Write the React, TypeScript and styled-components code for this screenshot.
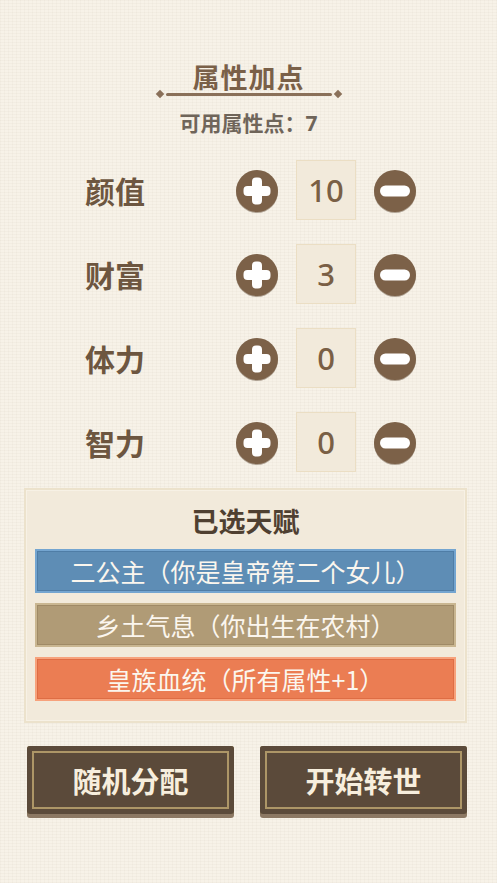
import styled, { createGlobalStyle } from 'styled-components'
import { useState } from 'react'

const GlobalStyle = createGlobalStyle`
  html, body {
    margin: 0;
    padding: 0;
  }
  body {
    background-color: #f7f2e8;
    background-image:
      repeating-linear-gradient(0deg, rgba(120, 100, 70, 0.035) 0 1px, transparent 1px 3px),
      repeating-linear-gradient(90deg, rgba(120, 100, 70, 0.03) 0 1px, transparent 1px 4px);
    font-family: "Noto Sans", "Noto Sans CJK SC", sans-serif;
  }
`

const attrs = [
  { name: '颜值', value: 10 },
  { name: '财富', value: 3 },
  { name: '体力', value: 0 },
  { name: '智力', value: 0 },
]

const talents = [
  { text: '二公主（你是皇帝第二个女儿）', kind: 'blue' },
  { text: '乡土气息（你出生在农村）', kind: 'tan' },
  { text: '皇族血统（所有属性+1）', kind: 'orange' },
]

const talentColors = {
  blue: { bg: '#5e8db5', edge: '#74a5d0', line: '#4f7da6' },
  tan: { bg: '#b09b76', edge: '#c9b691', line: '#9f8a66' },
  orange: { bg: '#eb7d53', edge: '#f7a27c', line: '#de6d44' },
}

const RoundIcon = ({ minus }: { minus?: boolean }) => (
  <svg width="44" height="45" viewBox="0 0 44 45">
    <circle cx="22" cy="23" r="21" fill="#5e4732" opacity="0.45" />
    <circle cx="22" cy="22" r="21" fill="#7c6148" />
    {minus ? (
      <rect x="7" y="16.5" width="30" height="11" rx="5.5" fill="#fff" />
    ) : (
      <path
        d="M17 12.5 Q17 8.5 21 8.5 H23 Q27 8.5 27 12.5 V17 H31.5 Q35.5 17 35.5 21 V23 Q35.5 27 31.5 27 H27 V31.5 Q27 35.5 23 35.5 H21 Q17 35.5 17 31.5 V27 H12.5 Q8.5 27 8.5 23 V21 Q8.5 17 12.5 17 H17 Z"
        fill="#fff"
      />
    )}
  </svg>
)

export default function App() {
  const [values, setValues] = useState(attrs.map(a => a.value))
  const [left, setLeft] = useState(7)

  const change = (i: number, d: number) => {
    if (d > 0 && left <= 0) return
    if (d < 0 && values[i] <= 0) return
    setValues(values.map((v, j) => (j === i ? v + d : v)))
    setLeft(left - d)
  }

  return (
    <>
      <GlobalStyle />
      <Page>
        <Header>
          <Title>属性加点</Title>
          <Divider />
          <Available>可用属性点：7</Available>
        </Header>

        <Rows>
          {attrs.map((a, i) => (
            <Row key={a.name}>
              <Label>{a.name}</Label>
              <IconButton onClick={() => change(i, 1)}>
                <RoundIcon />
              </IconButton>
              <ValueBox>{values[i]}</ValueBox>
              <IconButton onClick={() => change(i, -1)}>
                <RoundIcon minus />
              </IconButton>
            </Row>
          ))}
        </Rows>

        <Panel>
          <PanelTitle>已选天赋</PanelTitle>
          <TalentList>
            {talents.map(t => (
              <Talent key={t.text} kind={t.kind as keyof typeof talentColors}>
                {t.text}
              </Talent>
            ))}
          </TalentList>
        </Panel>

        <Buttons>
          <ActionButton>随机分配</ActionButton>
          <ActionButton>开始转世</ActionButton>
        </Buttons>
      </Page>
    </>
  )
}

const Page = styled.div`
  width: 497px;
  min-height: 883px;
  box-sizing: border-box;
  padding: 61px 0 0 0;
  display: flex;
  flex-direction: column;
  align-items: center;
`

const Header = styled.div`
  display: flex;
  flex-direction: column;
  align-items: center;
`

const Title = styled.div`
  font-family: "Noto Sans CJK SC", sans-serif;
  font-size: 27px;
  line-height: 31px;
  font-weight: 700;
  color: #7a6048;
  letter-spacing: 1px;
`

const Divider = styled.div`
  position: relative;
  width: 166px;
  height: 3px;
  margin-top: 1px;
  background: #8a7059;
  border-radius: 2px;

  &::before, &::after {
    content: '';
    position: absolute;
    top: -2px;
    width: 6px;
    height: 6px;
    background: #8a7059;
    transform: rotate(45deg);
  }
  &::before { left: -9px; }
  &::after { right: -9px; }
`

const Available = styled.div`
  margin-top: 14px;
  font-family: "Noto Sans", "Noto Sans CJK SC", sans-serif;
  font-size: 21px;
  line-height: 26px;
  font-weight: 700;
  color: #6f655a;
`

const Rows = styled.div`
  margin-top: 24px;
  display: flex;
  flex-direction: column;
  gap: 24px;
  margin-left: 5px;
`

const Row = styled.div`
  display: flex;
  align-items: center;
  height: 60px;
`

const Label = styled.div`
  width: 150px;
  font-family: "Noto Sans CJK SC", sans-serif;
  font-size: 30px;
  font-weight: 700;
  color: #6d5640;
`

const IconButton = styled.button`
  border: none;
  background: none;
  padding: 0;
  width: 44px;
  height: 45px;
  margin-top: 2px;
  cursor: pointer;
`

const ValueBox = styled.div`
  width: 58px;
  height: 58px;
  margin: 0 17px 0 17px;
  display: flex;
  align-items: center;
  justify-content: center;
  background: #f2eadb;
  border: 1px solid #ebdec4;
  font-family: "Noto Sans", sans-serif;
  font-size: 31px;
  font-weight: 500;
  color: #7a5f45;
`

const Panel = styled.div`
  margin-top: 16px;
  margin-right: 6px;
  width: 443px;
  box-sizing: border-box;
  padding: 15px 9px 20px 9px;
  background: #f2eadb;
  border: 2px solid #ece2cc;
  box-shadow: inset 0 0 0 1px #f7f1e5;
  display: flex;
  flex-direction: column;
  align-items: stretch;
`

const PanelTitle = styled.div`
  text-align: center;
  font-family: "Noto Sans CJK SC", sans-serif;
  font-size: 27px;
  line-height: 31px;
  font-weight: 700;
  color: #4f4031;
`

const TalentList = styled.div`
  margin-top: 13px;
  display: flex;
  flex-direction: column;
  gap: 10px;
`

const Talent = styled.div<{ kind: keyof typeof talentColors }>`
  height: 44px;
  box-sizing: border-box;
  display: flex;
  align-items: center;
  justify-content: center;
  background: ${p => talentColors[p.kind].bg};
  border: 2px solid ${p => talentColors[p.kind].edge};
  box-shadow: inset 0 0 0 1px ${p => talentColors[p.kind].line};
  font-family: "Noto Sans CJK SC", sans-serif;
  font-size: 25px;
  color: #fbf6ee;
`

const Buttons = styled.div`
  margin-top: 23px;
  width: 440px;
  display: flex;
  justify-content: space-between;
  margin-right: 3px;
`

const ActionButton = styled.button`
  width: 207px;
  height: 68px;
  border: none;
  border-radius: 3px;
  background: #5b4a3a;
  box-shadow: 0 4px 0 #8c7863, inset 0 0 0 5px #5b4a3a, inset 0 0 0 7px #ad9667;
  font-family: "Noto Sans CJK SC", sans-serif;
  font-size: 29px;
  font-weight: 700;
  color: #f7eedd;
  cursor: pointer;
`
